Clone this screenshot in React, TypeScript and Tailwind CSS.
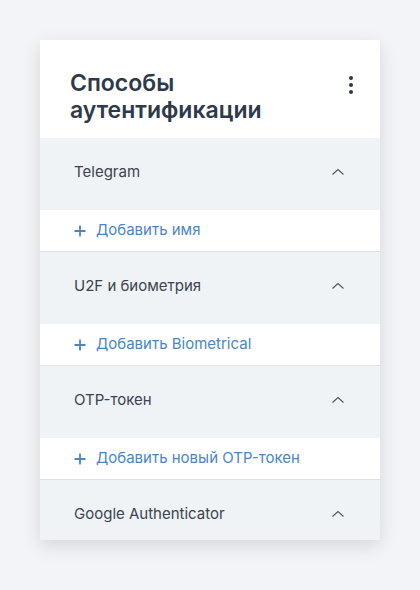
import React from 'react';

const sections = [
  { title: 'Telegram', action: 'Добавить имя' },
  { title: 'U2F и биометрия', action: 'Добавить Biometrical' },
  { title: 'OTP-токен', action: 'Добавить новый OTP-токен' },
  { title: 'Google Authenticator', action: null },
];

function ChevronUp() {
  return (
    <svg width="14" height="8" viewBox="0 0 14 8" fill="none" className="text-[#4b5563]">
      <path d="M1.5 6.5L7 1.5L12.5 6.5" stroke="currentColor" strokeWidth="1.1" />
    </svg>
  );
}

function Plus() {
  return (
    <svg width="12" height="12" viewBox="0 0 12 12" fill="none" className="text-[#4a86c5]">
      <path d="M6 0.5V11.5M0.5 6H11.5" stroke="currentColor" strokeWidth="1.8" />
    </svg>
  );
}

export default function App() {
  return (
    <div
      className="min-h-[590px] w-full bg-[#f2f4f7] pt-10 px-10"
      style={{ fontFamily: 'Inter, Roboto, "Noto Sans", sans-serif' }}
    >
      <div className="w-[340px] bg-white shadow-[0_6px_18px_rgba(0,0,0,0.12)]">
        <div className="flex h-[98px] items-start justify-between pl-[30px] pr-[24px] pt-[30px]">
          <h1 className="text-[23px] leading-[27px] font-semibold text-[#2d3a4a]">
            Способы
            <br />
            аутентификации
          </h1>
          <div className="flex flex-col gap-[3px] pt-[6px] pr-[3px]">
            <span className="block h-1 w-1 rounded-full bg-[#2d3a4a]" />
            <span className="block h-1 w-1 rounded-full bg-[#2d3a4a]" />
            <span className="block h-1 w-1 rounded-full bg-[#2d3a4a]" />
          </div>
        </div>

        {sections.map((s, i) => (
          <div key={i}>
            <div
              className={`flex items-start justify-between bg-[#f0f3f6] pl-[34px] pr-[35px] pt-[24px] ${
                s.action ? 'h-[72px]' : 'h-[60px]'
              }`}
            >
              <span className="text-[15px] leading-5 text-[#3a4350]">{s.title}</span>
              <span className="pt-[6px]">
                <ChevronUp />
              </span>
            </div>
            {s.action && (
              <div className="flex h-[42px] items-center gap-[10px] border-b border-[#dde2e7] bg-white pl-[34px]">
                <Plus />
                <span className="text-[15px] text-[#4a86c5]">{s.action}</span>
              </div>
            )}
          </div>
        ))}
      </div>
    </div>
  );
}
